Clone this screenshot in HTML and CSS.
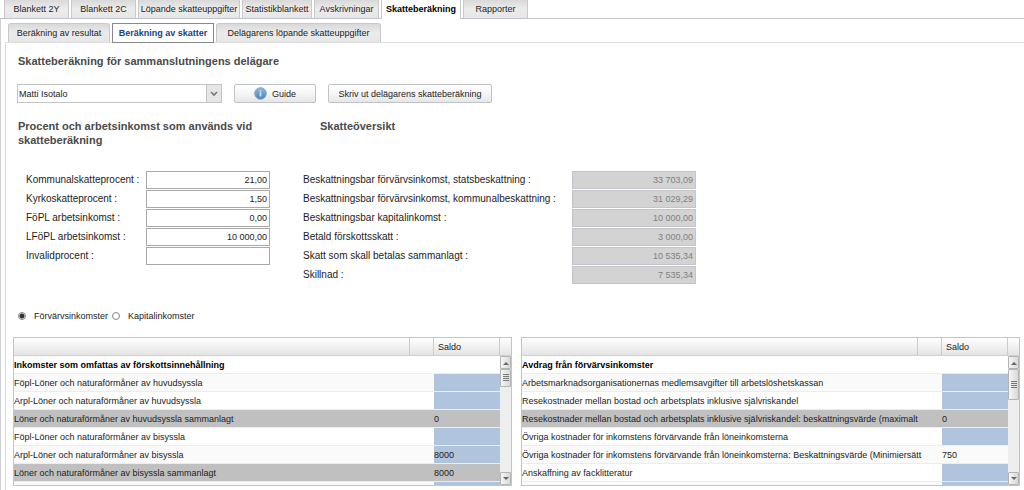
FILE: index.html
```html
<!DOCTYPE html>
<html lang="sv">
<head>
<meta charset="utf-8">
<title>Skatteberäkning</title>
<link rel="stylesheet" href="styles.css">
</head>
<body>
<nav class="tabs main-tabs">
  <button class="tab w-s">Blankett 2Y</button>
  <button class="tab w-s">Blankett 2C</button>
  <button class="tab w-xl">Löpande skatteuppgifter</button>
  <button class="tab w-m">Statistikblankett</button>
  <button class="tab w-s">Avskrivningar</button>
  <button class="tab w-l active">Skatteberäkning</button>
  <button class="tab w-s">Rapporter</button>
</nav>
<main class="outer">
  <nav class="tabs sub-tabs">
    <button class="tab w-xl">Beräkning av resultat</button>
    <button class="tab w-xl current">Beräkning av skatter</button>
    <button class="tab w-xxl">Delägarens löpande skatteuppgifter</button>
  </nav>
  <div class="inner">
    <h1>Skatteberäkning för sammanslutningens delägare</h1>
    <div class="toolbar">
      <div class="combo">
        <select aria-label="Delägare"><option>Matti Isotalo</option></select>
        <span class="combo-arrow"><svg width="8" height="6" viewBox="0 0 8 6"><path d="M1 1l3 3 3-3" fill="none" stroke="#777" stroke-width="1.600"/></svg></span>
      </div>
      <button class="btn guide">
        <svg width="13" height="13" viewBox="0 0 13 13"><defs><linearGradient id="blue" x1="0" y1="0" x2="0" y2="1"><stop offset="0" stop-color="#8fb9e0"/><stop offset="1" stop-color="#4a83bd"/></linearGradient></defs><circle cx="6.500" cy="6.500" r="5.800" fill="url(#blue)" stroke="#86a5c6" stroke-width="1"/><path d="M5.700 5.300h1.600v4.200h-1.600zM5.700 3h1.600v1.400h-1.600z" fill="#d5e6f6"/></svg>
        Guide</button>
      <button class="btn print">Skriv ut delägarens skatteberäkning</button>
    </div>

    <div class="columns">
      <section>
        <h2>Procent och arbetsinkomst som används vid skatteberäkning</h2>
        <div class="fields left-fields">
          <label for="a1">Kommunalskatteprocent :</label><input id="a1" value="21,00">
          <label for="a2">Kyrkoskatteprocent :</label><input id="a2" value="1,50">
          <label for="a3">FöPL arbetsinkomst :</label><input id="a3" value="0,00">
          <label for="a4">LFöPL arbetsinkomst :</label><input id="a4" value="10 000,00">
          <label for="a5">Invalidprocent :</label><input id="a5" value="">
        </div>
      </section>
      <section>
        <h2 class="overview">Skatteöversikt</h2>
        <div class="fields right-fields">
          <label for="b1">Beskattningsbar förvärvsinkomst, statsbeskattning :</label><input id="b1" value="33 703,09" disabled>
          <label for="b2">Beskattningsbar förvärvsinkomst, kommunalbeskattning :</label><input id="b2" value="31 029,29" disabled>
          <label for="b3">Beskattningsbar kapitalinkomst :</label><input id="b3" value="10 000,00" disabled>
          <label for="b4">Betald förskottsskatt :</label><input id="b4" value="3 000,00" disabled>
          <label for="b5">Skatt som skall betalas sammanlagt :</label><input id="b5" value="10 535,34" disabled>
          <label for="b6">Skillnad :</label><input id="b6" value="7 535,34" disabled>
        </div>
      </section>
    </div>

    <div class="radios">
      <input type="radio" name="kind" id="r1" checked><label for="r1">Förvärvsinkomster</label>
      <input type="radio" name="kind" id="r2"><label for="r2">Kapitalinkomster</label>
    </div>

    <div class="grids">
      <div class="grid">
        <div class="rows">
          <table>
            <colgroup><col><col class="c-gap"><col class="c-saldo"></colgroup>
            <thead><tr><th></th><th></th><th>Saldo</th></tr></thead>
            <tbody>
              <tr class="head"><td>Inkomster som omfattas av förskottsinnehållning</td><td></td><td></td></tr>
              <tr><td>Föpl-Löner och naturaförmåner av huvudsyssla</td><td></td><td class="edit"></td></tr>
              <tr><td>Arpl-Löner och naturaförmåner av huvudsyssla</td><td></td><td class="edit"></td></tr>
              <tr class="sum"><td>Löner och naturaförmåner av huvudsyssla sammanlagt</td><td></td><td>0</td></tr>
              <tr><td>Föpl-Löner och naturaförmåner av bisyssla</td><td></td><td class="edit"></td></tr>
              <tr><td>Arpl-Löner och naturaförmåner av bisyssla</td><td></td><td class="edit">8000</td></tr>
              <tr class="sum"><td>Löner och naturaförmåner av bisyssla sammanlagt</td><td></td><td>8000</td></tr>
              <tr><td></td><td></td><td class="edit"></td></tr>
            </tbody>
          </table>
        </div>
        <div class="side">
          <div class="cap"></div>
          <div class="scroll">
            <button aria-label="Upp"><svg width="6" height="4" viewBox="0 0 6 4"><path d="M0 4l3-3 3 3z" fill="#666"/></svg></button>
            <div class="thumb short"><svg width="6" height="8" viewBox="0 0 6 8"><path d="M0 .5h6M0 2.500h6M0 4.500h6M0 6.500h6" stroke="#777"/></svg></div>
            <button class="down" aria-label="Ned"><svg width="6" height="4" viewBox="0 0 6 4"><path d="M0 0l3 3 3-3z" fill="#666"/></svg></button>
          </div>
        </div>
      </div>
      <div class="grid">
        <div class="rows">
          <table>
            <colgroup><col><col class="c-gap"><col class="c-saldo"></colgroup>
            <thead><tr><th></th><th></th><th>Saldo</th></tr></thead>
            <tbody>
              <tr class="head"><td>Avdrag från förvärvsinkomster</td><td></td><td></td></tr>
              <tr><td>Arbetsmarknadsorganisationernas medlemsavgifter till arbetslöshetskassan</td><td></td><td class="edit"></td></tr>
              <tr><td>Resekostnader mellan bostad och arbetsplats inklusive självriskandel</td><td></td><td class="edit"></td></tr>
              <tr class="sum"><td>Resekostnader mellan bostad och arbetsplats inklusive självriskandel: beskattningsvärde (maximalt</td><td></td><td>0</td></tr>
              <tr><td>Övriga kostnader för inkomstens förvärvande från löneinkomsterna</td><td></td><td class="edit"></td></tr>
              <tr><td>Övriga kostnader för inkomstens förvärvande från löneinkomsterna: Beskattningsvärde (Minimiersätt</td><td></td><td>750</td></tr>
              <tr><td>Anskaffning av facklitteratur</td><td></td><td class="edit"></td></tr>
              <tr><td></td><td></td><td class="edit"></td></tr>
            </tbody>
          </table>
        </div>
        <div class="side">
          <div class="cap"></div>
          <div class="scroll">
            <button aria-label="Upp"><svg width="6" height="4" viewBox="0 0 6 4"><path d="M0 4l3-3 3 3z" fill="#666"/></svg></button>
            <div class="thumb"><svg width="6" height="8" viewBox="0 0 6 8"><path d="M0 .5h6M0 2.500h6M0 4.500h6M0 6.500h6" stroke="#777"/></svg></div>
            <button class="down" aria-label="Ned"><svg width="6" height="4" viewBox="0 0 6 4"><path d="M0 0l3 3 3-3z" fill="#666"/></svg></button>
          </div>
        </div>
      </div>
    </div>
  </div>
</main>
</body>
</html>
```
FILE: styles.css
```css
* { box-sizing: border-box; }
html, body { height: 100%; }
body {
  margin: 0;
  display: flex;
  flex-direction: column;
  overflow: hidden;
  background: #fff;
  color: #222;
  font: 9px/12px "Liberation Sans", Arial, sans-serif;
}
button, input, select { font: inherit; color: inherit; margin: 0; }
svg { display: block; flex: none; }

.tabs { display: flex; gap: 2px; flex: none; }
.main-tabs { height: 18px; padding-left: 4px; }
.sub-tabs { height: 19px; padding-left: 3px; }
.tab {
  padding: 0;
  white-space: nowrap;
  border: 1px solid #c9c9cc;
  border-bottom: 0;
  border-radius: 3px 3px 0 0;
  background: linear-gradient(#d9d9d9, #ececec 50%, #e6e6e6);
}
.main-tabs .tab { border-top: 0; border-radius: 0; padding-bottom: 1px; }
.w-s { width: 65px; }
.w-m { width: 70px; }
.w-l { width: 80px; }
.w-xl { width: 102px; }
.w-xxl { width: 165px; }
.main-tabs .active {
  background: #fff;
  color: #000;
  font-weight: bold;
  height: 19px;
  padding-bottom: 2px;
  z-index: 1;
}
.sub-tabs .current {
  height: 20px;
  z-index: 1;
  background: #fff;
  border: 1px solid #888;
  border-radius: 0;
  color: #15428b;
  font-weight: bold;
}

.outer {
  flex: 1;
  display: flex;
  flex-direction: column;
  border-top: 1px solid #c0c4cc;
  border-left: 1px solid #d0d0d4;
  padding: 4px 0 0 4px;
}
.inner {
  flex: 1;
  border-top: 1px solid #dcdcdc;
  border-left: 1px solid #d8d8d8;
  padding: 11px 4px 0 7px;
}
h1, h2 {
  margin: 0;
  color: #4a4a4a;
  font-size: 11px;
  line-height: 14px;
}
h1 { padding-left: 5px; }

.toolbar { display: flex; gap: 12px; padding: 16px 0 0 4px; }
.combo {
  display: flex;
  width: 205px;
  height: 19px;
  border: 1px solid #c3c3c3;
}
.combo select {
  flex: 1;
  appearance: none;
  border: 0;
  padding: 0 1px;
  background: #fff;
}
.combo-arrow {
  width: 15px;
  display: flex;
  align-items: center;
  justify-content: center;
  border-left: 1px solid #c3c3c3;
  background: #e6e6e6;
}
.btn {
  display: flex;
  align-items: center;
  justify-content: center;
  gap: 5px;
  height: 19px;
  padding: 0;
  border: 1px solid #bfc3ca;
  border-radius: 2px;
  background: linear-gradient(#fff, #f6f6f6 50%, #e6e6e6);
}
.guide { width: 82px; }
.print { width: 164px; }

.columns {
  display: grid;
  grid-template-columns: 285px 1fr;
  padding: 16px 0 0 5px;
}
h2 { height: 28px; max-width: 260px; }
.overview { padding-left: 17px; }
.fields {
  display: grid;
  row-gap: 1px;
  margin-top: 24px;
  color: #1c1c1c;
}
.left-fields { grid-template-columns: 120px 124px; padding-left: 8px; }
.right-fields { grid-template-columns: 269px 124px; }
.fields label { font-size: 10px; line-height: 18px; white-space: nowrap; }
.fields input {
  width: 100%;
  height: 18px;
  padding: 0 2px;
  border: 1px solid #aaa;
  background: #fff;
  text-align: right;
}
.fields input:disabled { border-color: #c4c4ca; background: #d3d3d3; color: #808080; }

.radios { display: flex; align-items: center; height: 12px; margin-top: 26px; padding-left: 5px; }
.radios input {
  appearance: none;
  width: 8px;
  height: 8px;
  border: 1px solid #888;
  border-radius: 50%;
  background: #fff;
}
.radios input:checked { background: radial-gradient(circle, #333 0 2px, #fff 3px); }
.radios label { padding: 0 4px 0 8px; }

.grids { display: flex; gap: 9px; margin-top: 15px; }
.grid { flex: 1; min-width: 0; display: flex; height: 149px; border: 1px solid #c4c4c8; }
.rows { flex: 1; min-width: 0; overflow: hidden; }
table { width: 100%; table-layout: fixed; border-collapse: separate; border-spacing: 0; }
.c-gap { width: 24px; }
.c-saldo { width: 66px; }
th {
  height: 18px;
  padding: 0 4px;
  font-weight: normal;
  text-align: left;
  border-right: 1px solid #ccc;
  border-bottom: 1px solid #ccd0d4;
  background: linear-gradient(#fff, #e4e4e4);
}
td {
  height: 18px;
  padding: 0;
  white-space: nowrap;
  border-bottom: 1px solid #ededed;
}
tbody tr:nth-child(even) { background: #fafafa; }
.head td { color: #000; font-weight: bold; }
tbody tr.sum { background: #c0c0c0; }
.edit { background: #b0c4de; }
.side { flex: none; width: 11px; display: flex; flex-direction: column; }
.cap { height: 18px; border-bottom: 1px solid #ccd0d4; background: linear-gradient(#fff, #e4e4e4); }
.scroll { flex: 1; display: flex; flex-direction: column; background: #eee; }
.scroll button, .thumb {
  display: flex;
  align-items: center;
  justify-content: center;
  width: 100%;
  height: 13px;
  padding: 0;
  border: 1px solid #b4b4b4;
  border-radius: 1px;
  background: linear-gradient(90deg, #f6f6f6, #d8d8d8);
}
.scroll .down { margin-top: auto; }
.scroll .thumb { height: 31px; }
.scroll .short { height: 18px; }
```
